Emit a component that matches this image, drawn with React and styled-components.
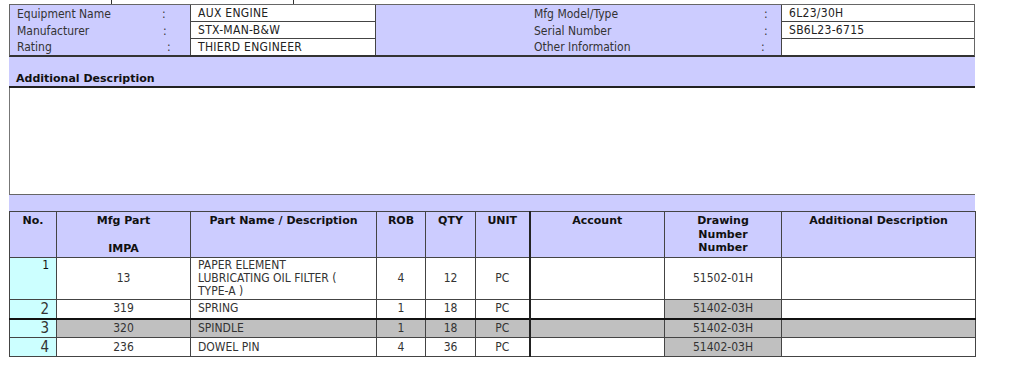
import React from "react";
import styled, { createGlobalStyle, css } from "styled-components";

const GlobalStyle = createGlobalStyle`
  body {
    margin: 0;
    background: #fff;
    font-family: "DejaVu Sans Condensed", "DejaVu Sans", Verdana, sans-serif;
    font-size: 12px;
    color: #222;
  }
`;

const LAVENDER = "#ccccff";
const CYAN = "#ccffff";
const GREY = "#c0c0c0";
const LINE = "#444";
const BOLD_FONT = `"DejaVu Sans", Verdana, sans-serif`;

const info = [
  { label: "Equipment Name", value: "AUX ENGINE", colon: 152, rLabel: "Mfg Model/Type", rValue: "6L23/30H", rColon: 388 },
  { label: "Manufacturer", value: "STX-MAN-B&W", colon: 153, rLabel: "Serial Number", rValue: "SB6L23-6715", rColon: 388 },
  { label: "Rating", value: "THIERD ENGINEER", colon: 157, rLabel: "Other Information", rValue: "", rColon: 385 },
];

const parts = [
  { no: "1", impa: "13", name: ["PAPER ELEMENT", "LUBRICATING OIL FILTER (", "TYPE-A )"], rob: 4, qty: 12, unit: "PC", drawing: "51502-01H", first: true },
  { no: "2", impa: "319", name: ["SPRING"], rob: 1, qty: 18, unit: "PC", drawing: "51402-03H" },
  { no: "3", impa: "320", name: ["SPINDLE"], rob: 1, qty: 18, unit: "PC", drawing: "51402-03H", shaded: true },
  { no: "4", impa: "236", name: ["DOWEL PIN"], rob: 4, qty: 36, unit: "PC", drawing: "51402-03H" },
];

function App() {
  return (
    <>
      <GlobalStyle />
      <Page>
        {/* bottom edge of the previous block, cut off by the window */}
        <TopStrip>
          <StripCell w={102} />
          <StripCell w={181} />
        </TopStrip>

        <InfoGrid>
          {info.map((row, i) => (
            <React.Fragment key={row.label}>
              <LabelCell pad={7}>
                <LabelText w={row.colon - 7}>{row.label}</LabelText>:
              </LabelCell>
              <ValueCell last={i === info.length - 1}>{row.value}</ValueCell>
              <LabelCell pad={158}>
                <LabelText w={row.rColon - 158}>{row.rLabel}</LabelText>:
              </LabelCell>
              <ValueCell edge last={i === info.length - 1}>
                {row.rValue}
              </ValueCell>
            </React.Fragment>
          ))}
        </InfoGrid>

        <SectionBar>Additional Description</SectionBar>
        <DescBox />
        <Band />

        <PartsTable>
          <colgroup>
            <col style={{ width: 47 }} />
            <col style={{ width: 134 }} />
            <col style={{ width: 186 }} />
            <col style={{ width: 49 }} />
            <col style={{ width: 50 }} />
            <col style={{ width: 54 }} />
            <col style={{ width: 135 }} />
            <col style={{ width: 117 }} />
            <col style={{ width: 194 }} />
          </colgroup>
          <thead>
            <tr>
              <Th>No.</Th>
              <Th>
                Mfg Part
                <br />
                <br />
                IMPA
              </Th>
              <Th>Part Name / Description</Th>
              <Th>ROB</Th>
              <Th>QTY</Th>
              <Th thick>UNIT</Th>
              <Th>Account</Th>
              <Th tight>
                Drawing
                <br />
                Number
                <br />
                Number
              </Th>
              <Th>Additional Description</Th>
            </tr>
          </thead>
          <tbody>
            {parts.map((p) => (
              <Row key={p.no} first={p.first} shaded={p.shaded}>
                <NoCell big={!p.first}>{p.no}</NoCell>
                <Td>{p.impa}</Td>
                <Td left>
                  {p.name.map((line) => (
                    <NameLine key={line}>{line}</NameLine>
                  ))}
                </Td>
                <Td>{p.rob}</Td>
                <Td>{p.qty}</Td>
                <Td thick>{p.unit}</Td>
                <Td />
                <Td grey={!p.first}>{p.drawing}</Td>
                <Td />
              </Row>
            ))}
          </tbody>
        </PartsTable>
      </Page>
    </>
  );
}

export default App;

const Page = styled.div`
  width: 966px;
  margin-left: 9px;
`;

const TopStrip = styled.div`
  display: flex;
  height: 4px;
  overflow: hidden;
`;

const StripCell = styled.div`
  width: ${(p) => p.w}px;
  flex: none;
  border-right: 1px solid #333;
  height: 4px;
`;

const InfoGrid = styled.div`
  display: grid;
  grid-template-columns: 180px 186px 405px 193px;
  grid-template-rows: 17px 17px 16px;
  background: ${LAVENDER};
  border: 1px solid #666;
  border-bottom: 2px solid #333;
`;

const LabelCell = styled.div`
  display: flex;
  align-items: center;
  padding-left: ${(p) => p.pad}px;
  white-space: nowrap;
  color: #333;
`;

const LabelText = styled.span`
  width: ${(p) => p.w}px;
  flex: none;
`;

const ValueCell = styled.div`
  display: flex;
  align-items: center;
  padding-left: 7px;
  background: #fff;
  border-left: 1px solid ${LINE};
  border-right: ${(p) => (p.edge ? "none" : `1px solid ${LINE}`)};
  border-bottom: ${(p) => (p.last ? "none" : `1px solid ${LINE}`)};
  letter-spacing: 0.3px;
`;

const SectionBar = styled.div`
  height: 28px;
  display: flex;
  align-items: flex-end;
  padding: 0 0 1px 7px;
  background: ${LAVENDER};
  border-bottom: 2px solid #222;
  font-family: ${BOLD_FONT};
  font-size: 11px;
  font-weight: bold;
  color: #111;
`;

const DescBox = styled.div`
  height: 106px;
  background: #fff;
  border-left: 1px solid #777;
  border-bottom: 1px solid #666;
`;

const Band = styled.div`
  height: 16px;
  background: ${LAVENDER};
`;

const PartsTable = styled.table`
  width: 966px;
  table-layout: fixed;
  border-collapse: collapse;
  border: 1px solid #666;
`;

const Th = styled.th`
  height: 43px;
  padding: 2px 2px 0;
  vertical-align: top;
  text-align: center;
  font-family: ${BOLD_FONT};
  font-size: 11px;
  font-weight: bold;
  line-height: ${(p) => (p.tight ? 13.5 : 14)}px;
  background: ${LAVENDER};
  color: #111;
  border: 1px solid ${LINE};
  border-right: ${(p) => (p.thick ? "2px solid #222" : `1px solid ${LINE}`)};
`;

const Row = styled.tr`
  height: ${(p) => (p.first ? 42 : 19)}px;
  background: ${(p) => (p.shaded ? GREY : "#fff")};
  ${(p) =>
    p.shaded &&
    css`
      & > td {
        border-top: 2px solid #111;
      }
    `}
`;

const Td = styled.td`
  padding: 0 7px;
  text-align: ${(p) => (p.left ? "left" : "center")};
  vertical-align: middle;
  line-height: 13px;
  color: #333;
  border: 1px solid ${LINE};
  border-right: ${(p) => (p.thick ? "2px solid #222" : `1px solid ${LINE}`)};
  ${(p) =>
    p.grey &&
    css`
      background: ${GREY};
    `}
`;

const NoCell = styled(Td)`
  text-align: right;
  background: ${CYAN};
  ${(p) =>
    p.big
      ? css`
          font-size: 15px;
          line-height: 16px;
          padding-right: 7px;
        `
      : css`
          vertical-align: top;
          padding-top: 1px;
          padding-right: 7px;
          color: #111;
        `}
`;

const NameLine = styled.div`
  white-space: nowrap;
`;
